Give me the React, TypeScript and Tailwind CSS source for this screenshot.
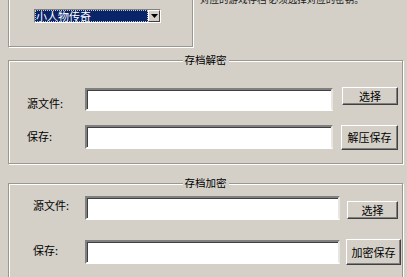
const font = {
  fontFamily: '"Noto Sans CJK SC", "Noto Sans", sans-serif',
};

function Field({ w, h, mt = 0 }: { w: number; h: number; mt?: number }) {
  return (
    <div
      className="border-2 border-t-[#808080] border-l-[#808080] border-b-white border-r-[#e8e6e2] bg-white shadow-[inset_1px_1px_0_#404040]"
      style={{ width: w, height: h, marginTop: mt }}
    />
  );
}

function Btn({
  label,
  w,
  h,
  ml,
  mt = 0,
}: {
  label: string;
  w: number;
  h: number;
  ml: number;
  mt?: number;
}) {
  return (
    <button
      className="flex items-center justify-center border border-t-white border-l-white border-b-[#404040] border-r-[#404040] bg-[#d4d0c8] text-[11px] leading-none text-black shadow-[inset_-1px_-1px_0_#808080]"
      style={{ width: w, height: h, marginLeft: ml, marginTop: mt }}
    >
      {label}
    </button>
  );
}

function Group({
  title,
  className,
  children,
}: {
  title: string;
  className: string;
  children: React.ReactNode;
}) {
  return (
    <div
      className={
        "relative ml-[8px] w-[395px] border border-[#9a978f] shadow-[inset_1px_1px_0_#fff,1px_1px_0_#fff] " +
        className
      }
    >
      <span className="absolute left-1/2 top-[-7px] -translate-x-1/2 bg-[#d4d0c8] px-[2px] text-[10.5px] leading-[12px] text-black">
        {title}
      </span>
      {children}
    </div>
  );
}

export default function App() {
  return (
    <div
      className="w-[407px] h-[277px] overflow-hidden bg-[#d4d0c8] text-black"
      style={font}
    >
      {/* top: game select */}
      <div className="flex items-start">
        <div className="relative ml-[8px] mt-[-12px] h-[59px] w-[185px] border border-[#9a978f] shadow-[inset_1px_1px_0_#fff,1px_1px_0_#fff]">
          <div className="ml-[25px] mt-[20px] flex h-[14px] w-[127px] border border-t-[#808080] border-l-[#808080] border-b-white border-r-white bg-white">
            <div className="flex flex-1 items-center bg-[#0a246a] pl-[1px] outline-1 outline-dotted outline-offset-[-1px] outline-[#c8c8c8]">
              <span className="text-[11px] leading-none text-white">
                小人物传奇
              </span>
            </div>
            <div className="flex w-[12px] items-center justify-center border border-t-white border-l-white border-b-[#404040] border-r-[#404040] bg-[#d4d0c8]">
              <svg width="7" height="4" viewBox="0 0 7 4">
                <path d="M0 0h7L3.5 4z" fill="#000" />
              </svg>
            </div>
          </div>
        </div>
        <p className="ml-[7px] mt-[-7px] text-[9.5px] leading-[12px] text-[#222]">
          对应的游戏存档 必须选择对应的密钥。
        </p>
      </div>

      {/* decrypt */}
      <Group title="存档解密" className="mt-[13px] h-[104px]">
        <div className="mt-[26px] flex items-start pl-[18px]">
          <span className="mt-[10px] w-[58px] text-[11px] leading-[12px]">
            源文件:
          </span>
          <Field w={248} h={23} mt={1} />
          <Btn label="选择" w={56} h={18} ml={9} />
        </div>
        <div className="mt-[14px] flex items-start pl-[18px]">
          <span className="mt-[5px] w-[58px] text-[11px] leading-[12px]">
            保存:
          </span>
          <Field w={248} h={24} />
          <Btn label="解压保存" w={57} h={25} ml={8} />
        </div>
      </Group>

      {/* encrypt */}
      <Group title="存档加密" className="mt-[19px] h-[110px]">
        <div className="mt-[12px] flex items-start pl-[24px]">
          <span className="mt-[3px] w-[52px] text-[11px] leading-[12px]">
            源文件:
          </span>
          <Field w={255} h={24} />
          <Btn label="选择" w={51} h={18} ml={7} mt={5} />
        </div>
        <div className="mt-[19px] flex items-start pl-[24px]">
          <span className="mt-[5px] w-[52px] text-[11px] leading-[12px]">
            保存:
          </span>
          <Field w={255} h={24} mt={1} />
          <Btn label="加密保存" w={55} h={26} ml={6} />
        </div>
      </Group>
    </div>
  );
}
